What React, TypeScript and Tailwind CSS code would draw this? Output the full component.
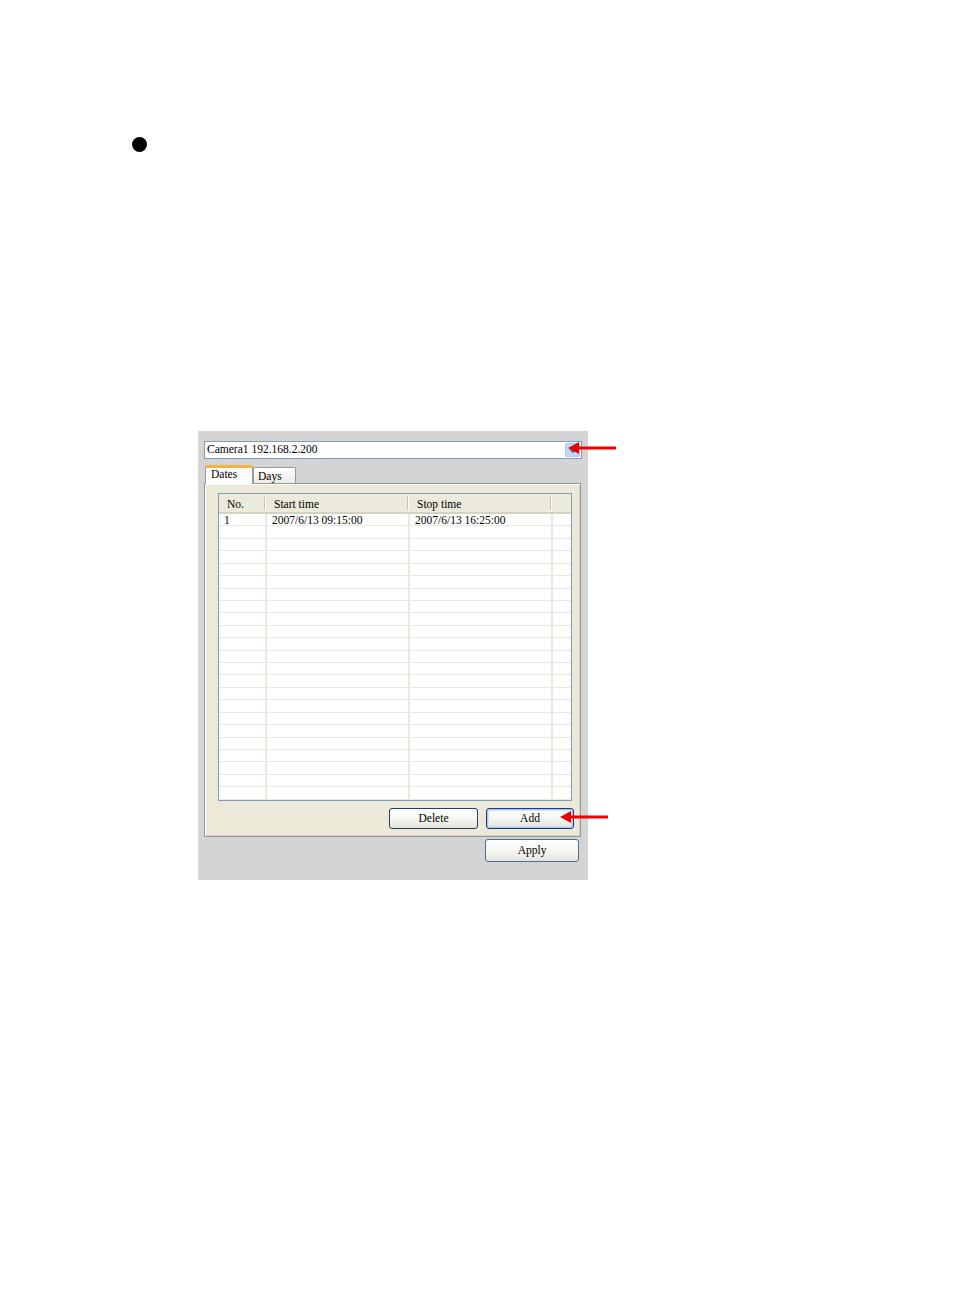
import React from 'react';

const serif = { fontFamily: '"Liberation Serif", "DejaVu Serif", serif' };

function RedArrow({ className }: { className: string }) {
  return (
    <svg className={className} width="48" height="12" viewBox="0 0 48 12">
      <polygon points="0,6 11,0 11,12" fill="#f00000" />
      <rect x="10" y="4.5" width="38" height="3" fill="#f00000" />
    </svg>
  );
}

function XpButton({ label, width, height, focused, light }: { label: string; width: string; height: string; focused?: boolean; light?: boolean }) {
  return (
    <button
      type="button"
      className={`${width} ${height} flex items-center justify-center rounded-[3px] border bg-gradient-to-b from-white via-[#f6f6f3] to-[#e4e3da] text-[11.5px] leading-none text-black ${
        light ? 'border-[#4d6d9c]' : 'border-[#1c3f6e]'
      } ${focused ? 'shadow-[inset_0_0_0_1px_#a9c4f0,inset_0_0_0_2px_#d3e2f8]' : ''}`}
    >
      {label}
    </button>
  );
}

export default function App() {
  const rows = Array.from({ length: 23 }, (_, i) => i);

  return (
    <div className="min-h-[1311px] w-[954px] bg-white pt-[137px] text-black" style={serif}>
      <div className="ml-[132px] h-[15px] w-[15px] rounded-full bg-black" />

      <div className="relative ml-[198px] mt-[279px] w-[390px]">
        <div className="h-[449px] w-[390px] bg-[#d4d4d4] pl-[6px] pt-[10px]">
          {/* Camera combo */}
          <div className="flex h-[18px] w-[378px] items-center border border-[#7f9db9] bg-white pl-[2px]">
            <span className="flex-1 text-[11.5px] leading-none">Camera1 192.168.2.200</span>
            <div className="mr-[1px] flex h-[14px] w-[15px] items-center justify-center rounded-[2px] border border-[#b5c8f2] bg-[#c3d4fc]">
              <svg width="8" height="5" viewBox="0 0 8 5">
                <path d="M1 1 L4 4 L7 1" stroke="#4d6185" strokeWidth="1.5" fill="none" />
              </svg>
            </div>
          </div>

          {/* Tabs */}
          <div className="mt-[6px] flex h-[18px] items-end pl-[1px]">
            <div className="relative z-10 -mb-px h-[19px] w-[48px] rounded-t-[2px] border-x border-t-[3px] border-x-[#919b9c] border-t-[#f5b23c] bg-[#fcfcfe] pl-[5px] pt-[1px] text-[11.5px] leading-none">
              Dates
            </div>
            <div className="h-[16px] w-[43px] rounded-t-[2px] border border-b-0 border-[#919b9c] bg-gradient-to-b from-white to-[#ecebe5] pl-[4px] pt-[3px] text-[11.5px] leading-none">
              Days
            </div>
          </div>

          {/* Tab body */}
          <div className="h-[354px] w-[377px] border border-[#919b9c] bg-[#ece9d8] pl-[13px] pt-[9px] shadow-[inset_1px_1px_0_#ffffff,inset_-1px_-1px_0_#d6d2c2]">
            <div className="h-[308px] w-[354px] overflow-hidden border border-[#7f9db9] bg-white">
              {/* header */}
              <div className="grid h-[20px] grid-cols-[47px_143px_143px_1fr] border-b-2 border-[#d6d2c2] bg-[#ebeadb] text-[11.5px] leading-none">
                <div className="flex items-center justify-between pl-[8px]">
                  <span className="pt-[3px]">No.</span>
                  <span className="h-[14px] w-[2px] border-l border-r border-l-[#c7c5b2] border-r-white" />
                </div>
                <div className="flex items-center justify-between pl-[8px]">
                  <span className="pt-[3px]">Start time</span>
                  <span className="h-[14px] w-[2px] border-l border-r border-l-[#c7c5b2] border-r-white" />
                </div>
                <div className="flex items-center justify-between pl-[8px]">
                  <span className="pt-[3px]">Stop time</span>
                  <span className="h-[14px] w-[2px] border-l border-r border-l-[#c7c5b2] border-r-white" />
                </div>
                <div />
              </div>
              {/* rows */}
              {rows.map((i) => (
                <div
                  key={i}
                  className="grid h-[12.43px] grid-cols-[48px_143px_143px_1fr] border-b border-[#ebe9dc] text-[11.5px] leading-none"
                >
                  <div className="flex items-center border-r-2 border-[#ebe9dc] pl-[5px] pt-[1px]">{i === 0 ? '1' : ''}</div>
                  <div className="flex items-center border-r-2 border-[#ebe9dc] pl-[5px] pt-[1px]">{i === 0 ? '2007/6/13 09:15:00' : ''}</div>
                  <div className="flex items-center border-r-2 border-[#ebe9dc] pl-[5px] pt-[1px]">{i === 0 ? '2007/6/13 16:25:00' : ''}</div>
                  <div />
                </div>
              ))}
            </div>

            <div className="mt-[7px] flex justify-end gap-[8px] pr-[6px]">
              <XpButton label="Delete" width="w-[89px]" height="h-[21px]" />
              <XpButton label="Add" width="w-[88px]" height="h-[21px]" focused />
            </div>
          </div>

          <div className="mt-[2px] flex w-[377px] justify-end pr-[2px]">
            <XpButton label="Apply" width="w-[94px]" height="h-[23px]" light />
          </div>
        </div>

        <RedArrow className="absolute left-[370px] top-[11px]" />
        <RedArrow className="absolute left-[362px] top-[380px]" />
      </div>
    </div>
  );
}
